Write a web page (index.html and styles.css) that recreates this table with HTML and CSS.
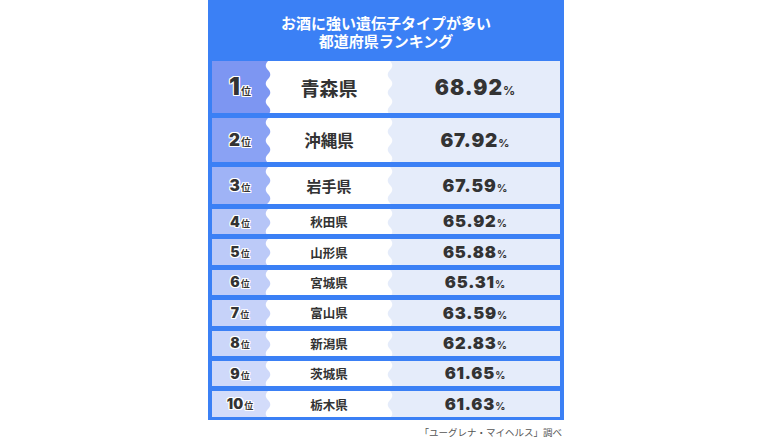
FILE: index.html
```html
<!DOCTYPE html>
<html lang="ja">
<head>
<meta charset="utf-8">
<link rel="stylesheet" href="styles.css">
</head>
<body>
<div class="page">
  <div class="panel">
    <h1 class="title"><span class="tl">お酒に強い遺伝子タイプが多い</span><span class="tl">都道府県ランキング</span></h1>
    <div class="rows">
      <div class="row r1"><div class="rank"><span class="num">1</span><span class="i">位</span></div><div class="name">青森県</div><div class="val"><span class="v">68.92</span><span class="p">%</span></div></div>
      <div class="row r2"><div class="rank"><span class="num">2</span><span class="i">位</span></div><div class="name">沖縄県</div><div class="val"><span class="v">67.92</span><span class="p">%</span></div></div>
      <div class="row r3"><div class="rank"><span class="num">3</span><span class="i">位</span></div><div class="name">岩手県</div><div class="val"><span class="v">67.59</span><span class="p">%</span></div></div>
      <div class="row r4"><div class="rank"><span class="num">4</span><span class="i">位</span></div><div class="name">秋田県</div><div class="val"><span class="v">65.92</span><span class="p">%</span></div></div>
      <div class="row r5"><div class="rank"><span class="num">5</span><span class="i">位</span></div><div class="name">山形県</div><div class="val"><span class="v">65.88</span><span class="p">%</span></div></div>
      <div class="row r6"><div class="rank"><span class="num">6</span><span class="i">位</span></div><div class="name">宮城県</div><div class="val"><span class="v">65.31</span><span class="p">%</span></div></div>
      <div class="row r7"><div class="rank"><span class="num">7</span><span class="i">位</span></div><div class="name">富山県</div><div class="val"><span class="v">63.59</span><span class="p">%</span></div></div>
      <div class="row r8"><div class="rank"><span class="num">8</span><span class="i">位</span></div><div class="name">新潟県</div><div class="val"><span class="v">62.83</span><span class="p">%</span></div></div>
      <div class="row r9"><div class="rank"><span class="num">9</span><span class="i">位</span></div><div class="name">茨城県</div><div class="val"><span class="v">61.65</span><span class="p">%</span></div></div>
      <div class="row r10"><div class="rank"><span class="num">10</span><span class="i">位</span></div><div class="name">栃木県</div><div class="val"><span class="v">61.63</span><span class="p">%</span></div></div>
    </div>
  </div>
  <p class="source">「ユーグレナ・マイヘルス」調べ</p>
</div>
</body>
</html>
```
FILE: styles.css
```css
html, body {
  margin: 0;
  background: #ffffff;
  font-family: "Noto Sans CJK JP", "Noto Sans", sans-serif;
}
.page {
  width: 356px;
  margin-left: 208px;
}
.panel {
  background: #3b80f5;
  padding: 0 4px 3px;
}
.title {
  margin: 0;
  height: 61px;
  box-sizing: border-box;
  padding-top: 14px;
  display: flex;
  flex-direction: column;
  align-items: center;
  color: #ffffff;
  font-size: 15px;
  font-weight: 700;
}
.tl {
  display: block;
  height: 18px;
  line-height: 18px;
}
.rows {
  display: flex;
  flex-direction: column;
  gap: 5px;
}
.row {
  display: grid;
  grid-template-columns: 60px 114px 174px;
  height: 25.4px;
  color: #333333;
}
.r1 { height: 52px; }
.r2 { height: 44px; }
.r3 { height: 37px; }

.rank {
  display: flex;
  align-items: baseline;
  justify-content: center;
  align-content: center;
  flex-wrap: wrap;
  padding-right: 4px;
  background-image: url("data:image/svg+xml,%3Csvg xmlns='http://www.w3.org/2000/svg' viewBox='0 0 8 18'%3E%3Cpath d='M8 0H4C1 3 1 6 4 9C7 12 7 15 4 18H8Z' fill='white'/%3E%3C/svg%3E");
  background-repeat: repeat-y;
  background-position: right top;
  background-size: 8px 18px;
  text-shadow: 1px 0 #fff, -1px 0 #fff, 0 1px #fff, 0 -1px #fff, 1px 1px #fff, -1px -1px #fff, 1px -1px #fff, -1px 1px #fff;
}
.num {
  font-family: "Inter", "DejaVu Sans", sans-serif;
  font-weight: 900;
  font-size: 14px;
  line-height: 1;
}
.i {
  font-size: 9px;
  font-weight: 700;
  line-height: 1;
  margin-left: 1px;
}
.r1 .num { font-size: 24px; }
.r1 .i { font-size: 10px; }
.r2 .num { font-size: 17px; }
.r2 .i { font-size: 10px; }
.r3 .num { font-size: 15.5px; }
.r3 .i { font-size: 9.5px; }

.r1 .rank { background-color: #7d96f2; }
.r2 .rank { background-color: #8aa2f4; }
.r3 .rank { background-color: #9fb3f6; }
.r4 .rank { background-color: #b6c5f7; }
.r5 .rank { background-color: #bccaf8; }
.r6 .rank { background-color: #c1cef8; }
.r7 .rank { background-color: #c6d2f9; }
.r8 .rank { background-color: #cbd6f9; }
.r9 .rank { background-color: #cfd9fa; }
.r10 .rank { background-color: #d3dcfa; }

.name {
  background: #ffffff;
  display: flex;
  align-items: center;
  justify-content: center;
  font-weight: 700;
  font-size: 12.5px;
}
.r1 .name { font-size: 19px; }
.r2 .name { font-size: 16.5px; }
.r3 .name { font-size: 15px; }

.val {
  background-color: #e5ecfa;
  background-image: url("data:image/svg+xml,%3Csvg xmlns='http://www.w3.org/2000/svg' viewBox='0 0 8 18'%3E%3Cpath d='M0 0H4C7 3 7 6 4 9C1 12 1 15 4 18H0Z' fill='white'/%3E%3C/svg%3E");
  background-repeat: repeat-y;
  background-position: left top;
  background-size: 8px 18px;
  display: flex;
  align-items: baseline;
  justify-content: center;
  align-content: center;
  flex-wrap: wrap;
  padding-left: 4px;
}
.v {
  font-family: "Inter", "DejaVu Sans", sans-serif;
  font-weight: 900;
  font-size: 16.5px;
  letter-spacing: 0.8px;
  margin-right: -0.8px;
  line-height: 1;
}
.p {
  font-family: "Inter", "DejaVu Sans", sans-serif;
  font-weight: 700;
  font-size: 10px;
  line-height: 1;
  margin-left: 1px;
}
.r1 .v { font-size: 21px; letter-spacing: 1px; margin-right: -1px; }
.r1 .p { font-size: 12px; }
.r2 .v { font-size: 19px; }
.r2 .p { font-size: 11px; }
.r3 .v { font-size: 17.5px; }
.r3 .p { font-size: 10.5px; }

.source {
  margin: 6px 2px 0 0;
  text-align: right;
  font-size: 9.5px;
  line-height: 12px;
  color: #555555;
}
```
